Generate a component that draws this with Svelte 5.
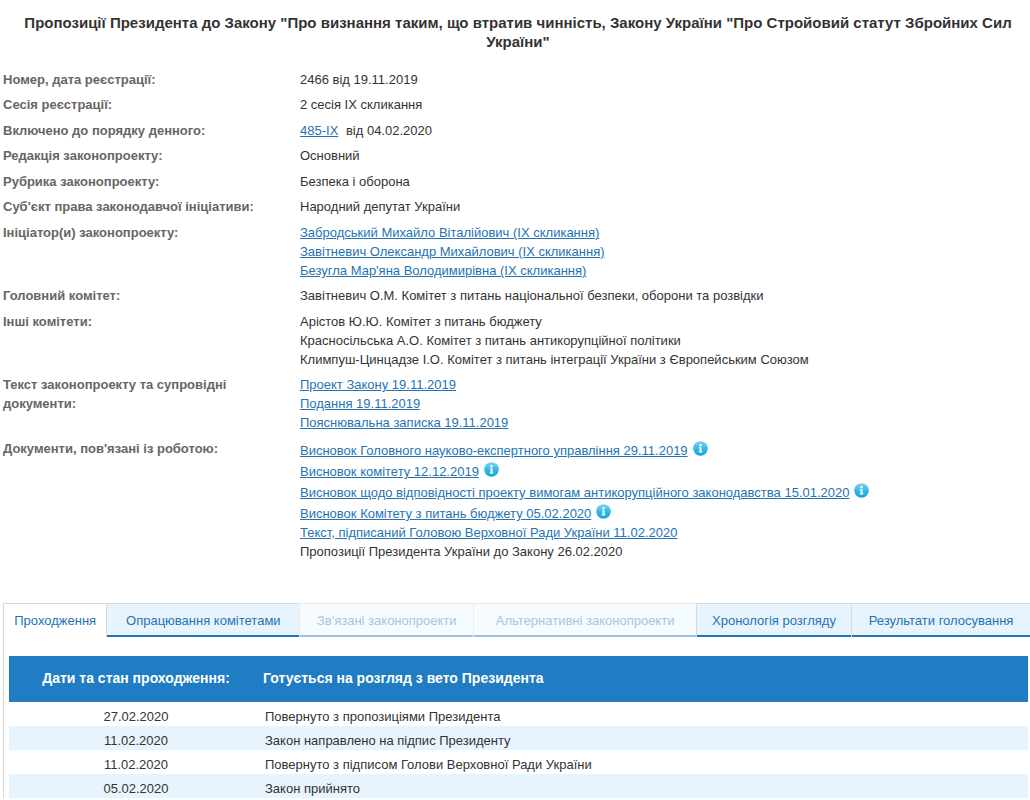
<script lang="ts">
  type Line = { text: string; href?: string; info?: boolean; after?: string };

  const fields: { label: string; lines: Line[] }[] = [
    { label: 'Номер, дата реєстрації:', lines: [{ text: '2466 від 19.11.2019' }] },
    { label: 'Сесія реєстрації:', lines: [{ text: '2 сесія IX скликання' }] },
    { label: 'Включено до порядку денного:', lines: [{ text: '485-IX', href: '#485', after: 'від 04.02.2020' }] },
    { label: 'Редакція законопроекту:', lines: [{ text: 'Основний' }] },
    { label: 'Рубрика законопроекту:', lines: [{ text: 'Безпека і оборона' }] },
    { label: "Суб'єкт права законодавчої ініціативи:", lines: [{ text: 'Народний депутат України' }] },
    {
      label: 'Ініціатор(и) законопроекту:',
      lines: [
        { text: 'Забродський Михайло Віталійович (IX скликання)', href: '#dep1' },
        { text: 'Завітневич Олександр Михайлович (IX скликання)', href: '#dep2' },
        { text: "Безугла Мар'яна Володимирівна (IX скликання)", href: '#dep3' }
      ]
    },
    {
      label: 'Головний комітет:',
      lines: [{ text: 'Завітневич О.М. Комітет з питань національної безпеки, оборони та розвідки' }]
    },
    {
      label: 'Інші комітети:',
      lines: [
        { text: 'Арістов Ю.Ю. Комітет з питань бюджету' },
        { text: 'Красносільська А.О. Комітет з питань антикорупційної політики' },
        { text: 'Климпуш-Цинцадзе І.О. Комітет з питань інтеграції України з Європейським Союзом' }
      ]
    },
    {
      label: 'Текст законопроекту та супровідні документи:',
      lines: [
        { text: 'Проект Закону 19.11.2019', href: '#doc1' },
        { text: 'Подання 19.11.2019', href: '#doc2' },
        { text: 'Пояснювальна записка 19.11.2019', href: '#doc3' }
      ]
    },
    {
      label: "Документи, пов'язані із роботою:",
      lines: [
        { text: 'Висновок Головного науково-експертного управління 29.11.2019', href: '#doc4', info: true },
        { text: 'Висновок комітету 12.12.2019', href: '#doc5', info: true },
        {
          text: 'Висновок щодо відповідності проекту вимогам антикорупційного законодавства 15.01.2020',
          href: '#doc6',
          info: true
        },
        { text: 'Висновок Комітету з питань бюджету 05.02.2020', href: '#doc7', info: true },
        { text: 'Текст, підписаний Головою Верховної Ради України 11.02.2020', href: '#doc8' },
        { text: 'Пропозиції Президента України до Закону 26.02.2020' }
      ]
    }
  ];

  // share - відносна ширина вкладки
  const tabs = [
    { title: 'Проходження', share: 103 },
    { title: 'Опрацювання комітетами', share: 193 },
    { title: "Зв'язані законопроекти", share: 174, disabled: true },
    { title: 'Альтернативні законопроекти', share: 223, disabled: true },
    { title: 'Хронологія розгляду', share: 155 },
    { title: 'Результати голосування', share: 179 }
  ];

  const stages = [
    { date: '27.02.2020', state: 'Повернуто з пропозиціями Президента' },
    { date: '11.02.2020', state: 'Закон направлено на підпис Президенту' },
    { date: '11.02.2020', state: 'Повернуто з підписом Голови Верховної Ради України' },
    { date: '05.02.2020', state: 'Закон прийнято' }
  ];

  let active = $state(0);
</script>

<main>
  <h1>Пропозиції Президента до Закону "Про визнання таким, що втратив чинність, Закону України "Про Стройовий статут Збройних Сил України"</h1>

  <!-- Картка законопроекту -->
  <dl>
    {#each fields as field}
      <dt>{field.label}</dt>
      <dd>
        {#each field.lines as line}
          <div class:with-info={line.info}>
            {#if line.href}<a href={line.href}>{line.text}</a>{:else}{line.text}{/if}
            {#if line.after}<span class="after">{line.after}</span>{/if}
            {#if line.info}
              <svg class="info" viewBox="0 0 16 16" aria-hidden="true">
                <defs>
                  <linearGradient id="ball" x1="0" y1="0" x2="0" y2="1">
                    <stop offset="0" stop-color="#7ed3f3" />
                    <stop offset="0.5" stop-color="#36b9e8" />
                    <stop offset="1" stop-color="#10a5de" />
                  </linearGradient>
                </defs>
                <circle cx="8" cy="8" r="7.8" fill="url(#ball)" />
                <circle cx="8" cy="4.4" r="1.3" fill="#fff" />
                <path d="M6.2 6.6h2.9v4.4h.8v1.2H6.2V11H7V7.8h-.8z" fill="#fff" />
              </svg>
            {/if}
          </div>
        {/each}
      </dd>
    {/each}
  </dl>

  <!-- Вкладки -->
  <div class="tabs" role="tablist">
    {#each tabs as tab, i}
      <button
        role="tab"
        class:active={active === i}
        aria-selected={active === i}
        disabled={tab.disabled}
        style:flex-grow={tab.share}
        onclick={() => (active = i)}>{tab.title}</button>
    {/each}
  </div>

  <!-- Стан проходження -->
  <div class="panel">
    <table>
      <thead>
        <tr>
          <th class="date">Дати та стан проходження:</th>
          <th>Готується на розгляд з вето Президента</th>
        </tr>
      </thead>
      <tbody>
        {#each stages as stage}
          <tr>
            <td class="date">{stage.date}</td>
            <td>{stage.state}</td>
          </tr>
        {/each}
      </tbody>
    </table>
  </div>
</main>

<style>
  :global(body) {
    background: #fff;
  }

  main {
    padding-top: 13px;
    font-family: "Liberation Sans", Arial, sans-serif;
    font-size: 13px;
    line-height: 19px;
    color: #333;
  }

  h1 {
    margin: 0 0 19px;
    padding-left: 6px;
    font-size: 15px;
    line-height: 19px;
    text-align: center;
  }

  dl {
    display: grid;
    grid-template-columns: 260px 1fr;
    column-gap: 37px;
    row-gap: 6px;
    margin: 0;
    padding: 0 3px;
  }

  dt {
    font-weight: bold;
    color: #666;
  }

  dd {
    margin: 0;
  }

  dd:nth-of-type(even) {
    padding-bottom: 1px;
  }

  a {
    color: #2673b4;
  }

  .after {
    margin-left: 4px;
  }

  .with-info {
    display: flex;
    gap: 5px;
    padding-top: 2px;
  }

  .info {
    flex: none;
    width: 15px;
    height: 15px;
  }

  .tabs {
    display: flex;
    margin: 42px 0 0 3px;
  }

  button {
    flex: 1 1 0;
    height: 34px;
    padding: 0;
    border: solid #d9d9d9;
    border-width: 1px 0 0 1px;
    background: #e7f4fe;
    box-shadow: inset 0 -2px #2074b7;
    font: inherit;
    white-space: nowrap;
    color: #2673b4;
  }

  button.active {
    background: #fff;
    box-shadow: none;
  }

  button:disabled {
    border-color: #ececec;
    background: #f6fbff;
    box-shadow: inset 0 -2px #a0c2de;
    color: #a5c6e0;
  }

  .panel {
    margin-left: 3px;
    padding: 19px 2px 0 5px;
    border-left: 1px solid #d9d9d9;
  }

  table {
    width: 100%;
    border-collapse: collapse;
  }

  th {
    height: 44px;
    padding: 0 0 2px;
    background: #207cc3;
    font-size: 14px;
    text-align: left;
    color: #fff;
  }

  td {
    padding: 5px 2px 0;
  }

  .date {
    box-sizing: border-box;
    width: 254px;
    text-align: center;
  }

  tbody tr:nth-child(even) {
    background: #e7f4fe;
  }
</style>
